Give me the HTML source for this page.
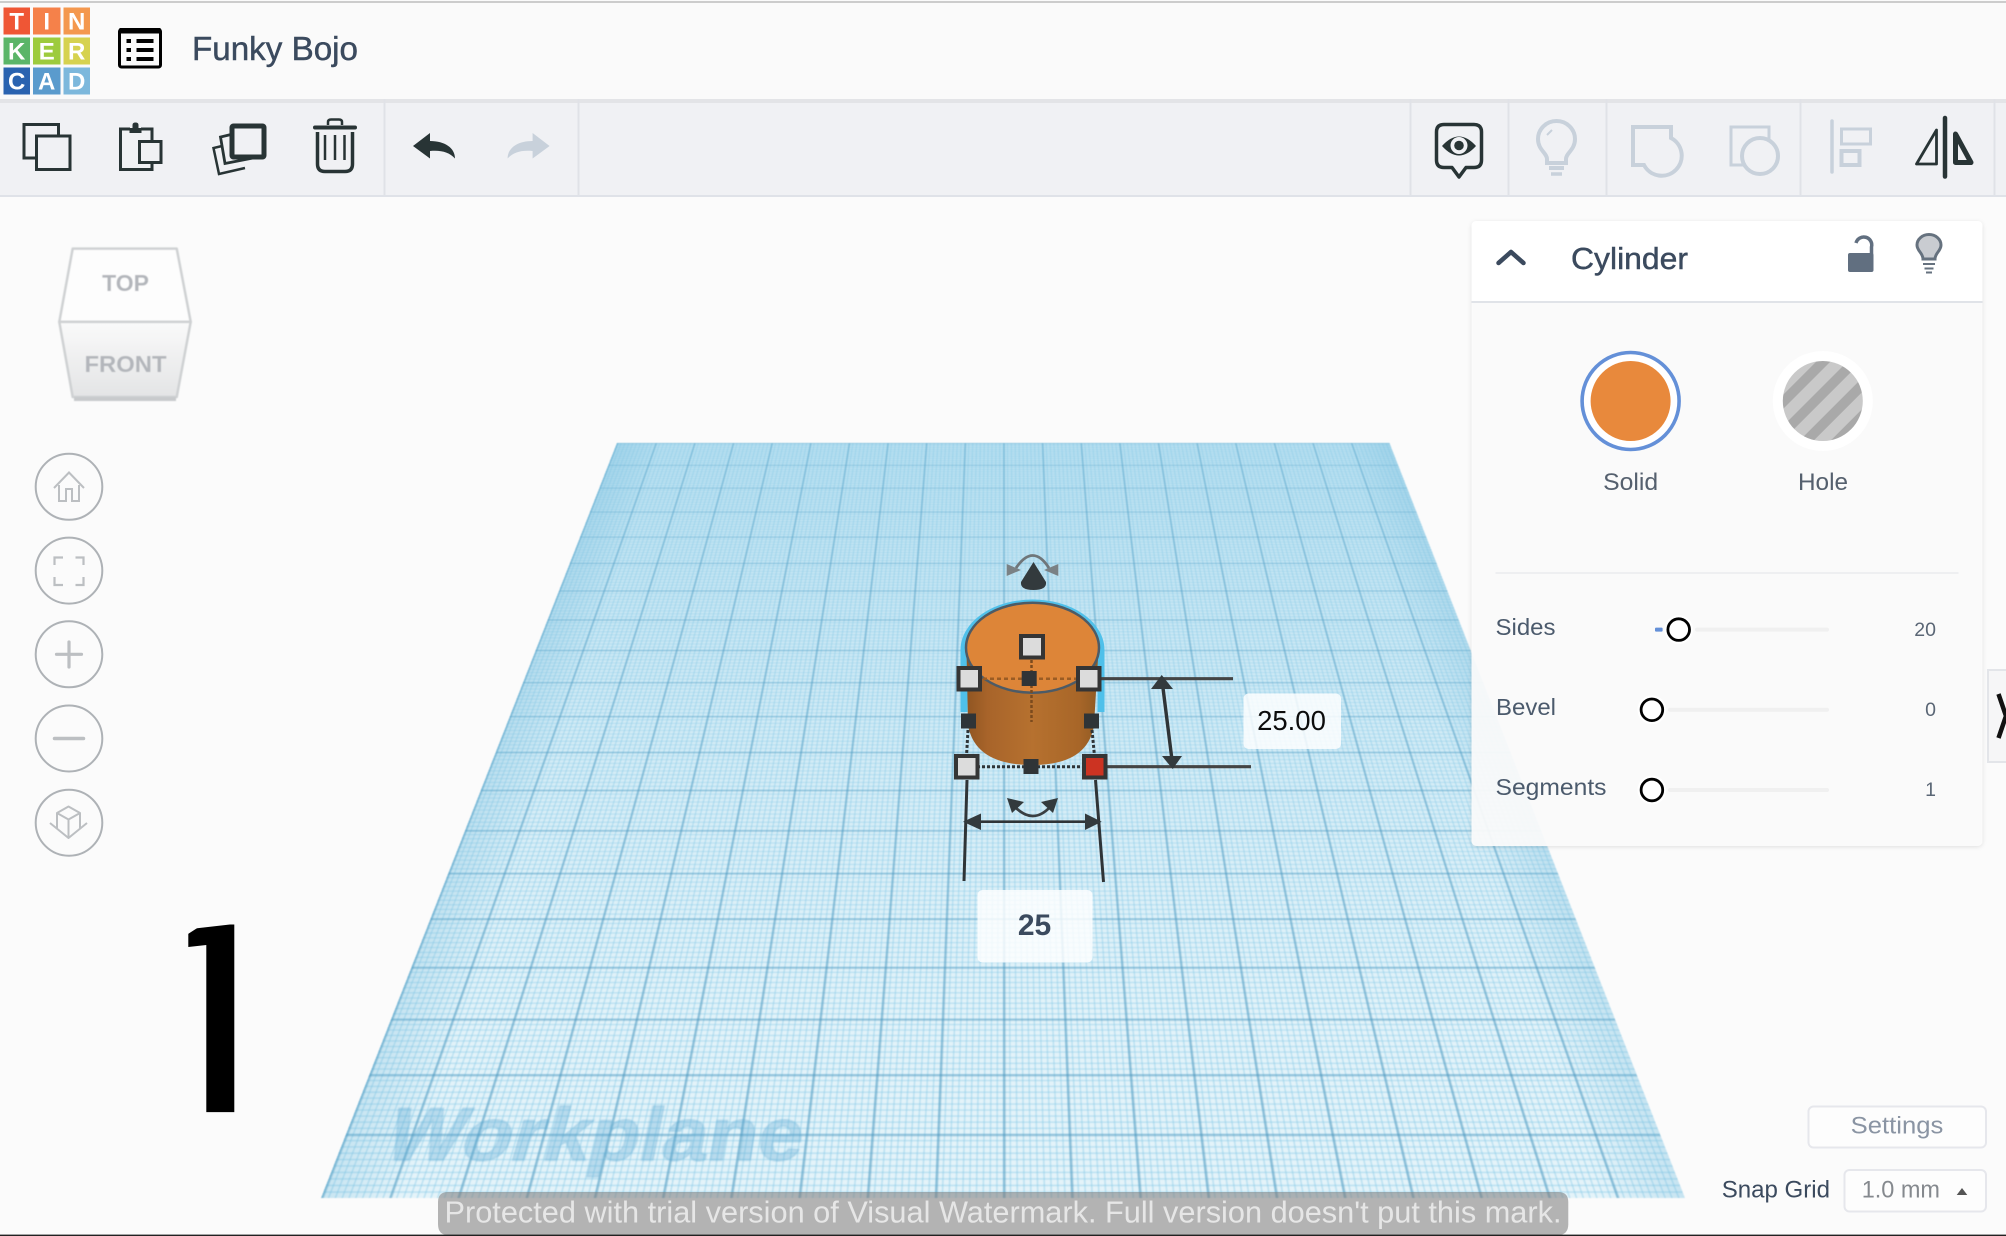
<!DOCTYPE html>
<html lang="en">
<head>
<meta charset="utf-8">
<title>Funky Bojo</title>
<style>
html,body{margin:0;padding:0;background:#fbfbfb;width:2006px;height:1236px;overflow:hidden}
#wrap{position:absolute;left:0;top:0;width:2006px;height:1236px;overflow:hidden;background:#fbfbfb}
#planeBox{position:absolute;left:0;top:0;width:2006px;height:1236px;filter:blur(.5px)}
#plane{position:absolute;left:0;top:0;width:1000px;height:1000px;transform-origin:0 0;
transform:matrix3d(.7725,0,0,0,-.4352,.2355,0,-.00043365,0,0,1,0,617,443,0,1);
background-color:#e8f5fa;
background-image:
linear-gradient(90deg,rgba(105,180,215,.24),rgba(105,180,215,0) 6%,rgba(105,180,215,0) 94%,rgba(105,180,215,.24)),
linear-gradient(180deg,rgba(110,190,225,.4),rgba(110,190,225,.2) 50%,rgba(110,190,225,.05) 85%,rgba(110,190,225,.03)),
linear-gradient(90deg,rgba(70,145,185,.48) 0,rgba(70,145,185,.48) 1.6px,transparent 1.6px),
linear-gradient(180deg,rgba(70,145,185,.42) 0,rgba(70,145,185,.42) 2px,transparent 2px),
linear-gradient(90deg,rgba(140,205,232,.55) 0,rgba(140,205,232,.55) 1px,transparent 1px),
linear-gradient(180deg,rgba(140,205,232,.55) 0,rgba(140,205,232,.55) 1.1px,transparent 1.1px);
background-size:100% 100%,100% 100%,50px 50px,50px 50px,5px 5px,5px 5px}
#wp{position:absolute;left:33px;top:920px;font:bold 62px/62px "Liberation Sans",sans-serif;color:rgba(85,165,210,.3);-webkit-text-stroke:1px rgba(85,165,210,.3);white-space:nowrap}
svg{position:absolute;left:0;top:0}
text{font-family:"Liberation Sans",sans-serif}
</style>
</head>
<body>
<div id="wrap">
<div id="planeBox"><div id="plane"><div id="wp">Workplane</div></div></div>

<svg width="2006" height="1236" viewBox="0 0 2006 1236" xmlns="http://www.w3.org/2000/svg">
<defs>
<filter id="hs" x="-5%" y="-20%" width="110%" height="160%"><feDropShadow dx="0" dy="1" stdDeviation="2.5" flood-color="#000" flood-opacity=".16"/></filter>
<filter id="ps" x="-5%" y="-5%" width="110%" height="110%"><feDropShadow dx="0" dy="1" stdDeviation="2" flood-color="#000" flood-opacity=".12"/></filter>
<filter id="soft"><feGaussianBlur stdDeviation=".6"/></filter>
<linearGradient id="body" x1="0" x2="1" y1="0" y2="0"><stop offset="0" stop-color="#8f5522"/><stop offset=".16" stop-color="#a8642a"/><stop offset=".5" stop-color="#b6712f"/><stop offset=".85" stop-color="#a86628"/><stop offset="1" stop-color="#8f5a24"/></linearGradient>
<linearGradient id="front" x1="0" x2="0" y1="0" y2="1"><stop offset="0" stop-color="#fafafa"/><stop offset="1" stop-color="#e3e4e5"/></linearGradient>
<pattern id="hatch" width="22" height="22" patternUnits="userSpaceOnUse" patternTransform="rotate(-45)"><rect width="22" height="22" fill="#c9c9c9"/><rect width="22" height="10" fill="#a9a9a9"/></pattern>
<clipPath id="one"><polygon points="188.3,929.3 234.3,924 234.3,1112.3 206.3,1112.3 206.3,945 188.3,947"/></clipPath>
</defs>

<!-- header -->
<rect x="0" y="0" width="2006" height="99" fill="#fafafa" filter="url(#hs)"/>
<rect x="0" y="1" width="2006" height="2" fill="#cccccc"/>
<rect x="0" y="99" width="2006" height="96" fill="#f0f1f4"/>
<rect x="0" y="99" width="2006" height="4" fill="#000" opacity=".05"/>
<rect x="0" y="195" width="2006" height="2" fill="#dfe2e8"/>
<g fill="#e0e2e7">
<rect x="383.5" y="99" width="2" height="96"/><rect x="577.5" y="99" width="2" height="96"/>
<rect x="1409.5" y="99" width="2" height="96"/><rect x="1507.5" y="99" width="2" height="96"/><rect x="1605.5" y="99" width="2" height="96"/><rect x="1799.5" y="99" width="2" height="96"/><rect x="1993.5" y="99" width="2" height="96"/>
</g>

<!-- logo -->
<g>
<rect x="3.5" y="7.5" width="26.5" height="27" fill="#ef5635"/><rect x="33" y="7.5" width="27.5" height="27" fill="#f5814a"/><rect x="63.5" y="7.5" width="26.5" height="27" fill="#f4984e"/>
<rect x="3.5" y="37.5" width="26.5" height="27" fill="#5bb568"/><rect x="33" y="37.5" width="27.5" height="27" fill="#9dcb3d"/><rect x="63.5" y="37.5" width="26.5" height="27" fill="#d6d24f"/>
<rect x="3.5" y="67.5" width="26.5" height="27" fill="#2a63b0"/><rect x="33" y="67.5" width="27.5" height="27" fill="#5a9bcd"/><rect x="63.5" y="67.5" width="26.5" height="27" fill="#7db8dc"/>
<g fill="#fff" font-size="24" font-weight="700" text-anchor="middle">
<text x="16.7" y="29.5">T</text><text x="46.7" y="29.5">I</text><text x="76.7" y="29.5">N</text>
<text x="16.7" y="59.5">K</text><text x="46.7" y="59.5">E</text><text x="76.7" y="59.5">R</text>
<text x="16.7" y="89.5">C</text><text x="46.7" y="89.5">A</text><text x="76.7" y="89.5">D</text>
</g>
</g>
<!-- doc list icon -->
<rect x="119.5" y="29.5" width="41" height="37.5" rx="2" fill="#fafafa" stroke="#000" stroke-width="3"/>
<rect x="119.5" y="28" width="41" height="5.5" fill="#000"/>
<g fill="#000"><rect x="126.5" y="39" width="4.5" height="4"/><rect x="136.5" y="39" width="17" height="4"/><rect x="126.5" y="48" width="4.5" height="4"/><rect x="136.5" y="48" width="17" height="4"/><rect x="126.5" y="57" width="4.5" height="4"/><rect x="136.5" y="57" width="17" height="4"/></g>
<text x="192" y="60" font-size="33" fill="#3b4a5e" stroke="#3b4a5e" stroke-width=".45" textLength="166" lengthAdjust="spacingAndGlyphs">Funky Bojo</text>

<!-- left tools -->
<g fill="none" stroke="#283435" stroke-width="3">
<rect x="24" y="124.5" width="34.5" height="33.5"/>
<rect x="36.5" y="136" width="33.5" height="33.5" fill="#f0f1f4"/>
<path d="M130 129H120.5V169.5H152V129H141"/>
<rect x="139.5" y="141.5" width="21.5" height="21" fill="#f0f1f4"/>
<path d="M222 146L213.5 148L219 174L245 168" stroke-width="2.5"/>
<path d="M231 134.5L220.5 137L225 163.5L253 158" stroke-width="2.8"/>
<rect x="232" y="126" width="32" height="31" stroke-width="5" rx="1.5" fill="#f0f1f4"/>
</g>
<path d="M129.5 133V128H132.5V125Q132.5 122.5 135.5 122.5Q138.5 122.5 138.5 125V128H141.5V133Z" fill="#283435"/>
<g fill="none" stroke="#283435">
<path d="M315 127.5H355" stroke-width="4" stroke-linecap="round"/>
<path d="M328 125V122Q328 119.5 331 119.5H339Q342 119.5 342 122V125" stroke-width="2.5"/>
<path d="M317.5 132V164Q317.5 171.5 325 171.5H345Q352.5 171.5 352.5 164V132" stroke-width="3.5"/>
<path d="M325 135V160M335 135V160M344.5 135V160" stroke-width="2.5"/>
</g>
<path id="undo" d="M413 146L430 133V141C445 141 455 148 455 158.5C449 152 441 150 430 151V158.5Z" fill="#283435"/>
<path d="M549.6 146L532.6 133V141C517.6 141 507.6 148 507.6 158.5C513.6 152 521.6 150 532.6 151V158.5Z" fill="#c8d1db"/>

<!-- right tools -->
<path d="M1444 124.5H1474Q1481.5 124.5 1481.5 132V160Q1481.5 167.5 1474 167.5H1466L1459 177L1452 167.5H1444Q1436.5 167.5 1436.5 160V132Q1436.5 124.5 1444 124.5Z" fill="none" stroke="#283435" stroke-width="3.5" stroke-linejoin="round"/>
<path d="M1442 146Q1459 127 1476 146Q1459 165 1442 146Z" fill="#283435"/>
<circle cx="1459" cy="145.5" r="8.5" fill="#f0f1f4"/><circle cx="1459" cy="145.5" r="4.8" fill="#283435"/>
<g fill="none" stroke="#c8d1db">
<path d="M1547 163V159C1547 153 1538 150 1538 139A18.5 18 0 0 1 1575 139C1575 150 1566 153 1566 159V163Z" stroke-width="4"/>
<path d="M1549 168H1564" stroke-width="4"/><path d="M1551 174H1562" stroke-width="3.5"/>
<path d="M1547 135L1552 130" stroke-width="2"/>
<path d="M1633 127H1671V138A20 20 0 1 1 1644 165H1633Z" stroke-width="4"/>
<rect x="1731" y="127" width="38" height="38" stroke-width="3"/>
<circle cx="1760" cy="156" r="18" stroke-width="4" fill="#f0f1f4"/>
<path d="M1832 121V172" stroke-width="3.5" stroke-linecap="round"/>
<rect x="1841.5" y="129" width="29" height="15" stroke-width="3"/>
<rect x="1841.5" y="151" width="18" height="14" stroke-width="4"/>
</g>
<g fill="none" stroke="#283435" stroke-linejoin="round">
<path d="M1945 118V176.5" stroke-width="4.5" stroke-linecap="round"/>
<path d="M1936.5 130L1916.5 164H1936.5Z" stroke-width="2.8"/>
<path d="M1955.5 134L1971 162.5H1955.5Z" stroke-width="5"/>
</g>

<!-- view cube -->
<g filter="url(#soft)">
<polygon points="72.7,248.6 176.7,248.6 190.7,321.9 59.3,321.9" fill="#fdfdfd" stroke="#cfd1d3" stroke-width="2.5" stroke-linejoin="round"/>
<polygon points="59.3,321.9 190.7,321.9 176.7,397 72.7,397" fill="url(#front)" stroke="#cfd1d3" stroke-width="2.5" stroke-linejoin="round"/>
<rect x="74" y="397" width="102" height="4" fill="#c8cacc"/>
<text x="125.5" y="291" text-anchor="middle" font-size="23" font-weight="700" fill="#b3b6bb">TOP</text>
<text x="125.5" y="372" text-anchor="middle" font-size="23" font-weight="700" fill="#b3b6bb" textLength="82" lengthAdjust="spacingAndGlyphs">FRONT</text>
</g>
<!-- nav buttons -->
<g fill="#fbfbfb" stroke="#aeb2b6" stroke-width="2">
<ellipse cx="69" cy="486.8" rx="33.3" ry="33"/><ellipse cx="69" cy="570.6" rx="33.3" ry="33"/><ellipse cx="69" cy="654.3" rx="33.3" ry="33"/><ellipse cx="69" cy="738.5" rx="33.3" ry="33"/><ellipse cx="69" cy="822.7" rx="33.3" ry="33"/>
</g>
<g fill="none" stroke="#bcbfc2">
<path d="M54 488L69 472.5L84 488M59 485V501H66V489H72V501H79V485" stroke-width="2"/>
<path d="M54.5 565V557.5H63M75.5 557.5H83.5V565M54.5 577V585H63M75.5 585H83.5V577" stroke-width="2.2"/>
<path d="M56.5 654.3H81.5M69 642V667" stroke-width="3.2" stroke-linecap="round"/>
<path d="M54.5 738.5H83.5" stroke-width="3.5" stroke-linecap="round"/>
<path d="M57 813L68.5 806.5L80 813L68.5 819.5ZM57 813V829M80 813V829M68.5 819.5V838M50 823L68.5 838L87 823" stroke-width="2" stroke-linejoin="round"/>
</g>

<!-- number 1 -->
<text x="137" y="1112.3" font-size="273" font-weight="700" fill="#000" clip-path="url(#one)">1</text>

<!-- cylinder -->
<path d="M964 712V650A68.5 47 0 0 1 1101 650V712" fill="none" stroke="#4fc0ea" stroke-width="7"/>
<path d="M966.5 650L968 725Q975 765 1032 765Q1088 765 1094 725L1098.5 650Z" fill="url(#body)"/>
<ellipse cx="1032.5" cy="647.7" rx="66.5" ry="45" fill="#dd8538" stroke="#4d5b66" stroke-width="2.5"/>
<g fill="none">
<path d="M969 678.7H1089" stroke="#9a5c24" stroke-width="2.5" stroke-dasharray="4 3"/>
<path d="M1031.5 660V722" stroke="#7b4a1d" stroke-width="2.5" stroke-dasharray="3 2"/>
<path d="M967 766.7H1095" stroke="#2f3437" stroke-width="3" stroke-dasharray="3 2"/>
<path d="M968 730L966.5 756M1092 730L1094.5 756" stroke="#2f3437" stroke-width="3" stroke-dasharray="3 2"/>
<path d="M1100 678.7H1233M1105 766.7H1251" stroke="#444" stroke-width="3.2"/>
<path d="M1162.5 684L1172 760" stroke="#2f3437" stroke-width="3.4"/>
<path d="M967 780L964 881M1095.5 780L1103.5 882" stroke="#2f3437" stroke-width="3"/>
<path d="M975 821.7H1090" stroke="#2f3437" stroke-width="2.6"/>
<path d="M1014 806Q1033 826 1051 806" stroke="#3a3f42" stroke-width="2.8"/>
<path d="M1016 568Q1033 543 1049 568" stroke="#6f767a" stroke-width="2.8"/>
</g>
<g fill="#333a3d">
<polygon points="1161.7,675 1151,689 1173,689"/>
<polygon points="1172.7,769 1162,756 1182,756"/>
<polygon points="963,821.7 981,813.5 981,830"/>
<polygon points="1101.7,821.7 1085,813.5 1085,830"/>
<polygon points="1007,798 1024,802 1012,813"/>
<polygon points="1058,798 1041,802 1053,813"/>
<path d="M1033.5 562L1046 582Q1047 590 1033.5 590Q1020 590 1021 582Z"/>
</g>
<g fill="#7a8185"><polygon points="1006.7,564 1006.7,576 1021,570"/><polygon points="1058.3,564 1058.3,576 1044,570"/></g>
<g stroke="#353535" stroke-width="4" fill="#dcdcdc">
<rect x="1021" y="636" width="22" height="21.5"/>
<rect x="958.5" y="668" width="21.5" height="21.5"/>
<rect x="1078" y="668" width="21.5" height="21.5"/>
<rect x="956" y="756" width="21.5" height="21.5"/>
<rect x="1084" y="756" width="21.5" height="21.5" fill="#cc3322"/>
</g>
<g fill="#2f3437">
<rect x="1021.7" y="671" width="15" height="15"/><rect x="961" y="713.5" width="15" height="15"/><rect x="1084" y="713.5" width="15" height="15"/><rect x="1023.5" y="759" width="15" height="15"/>
</g>
<rect x="1243.5" y="693.5" width="97.5" height="55.5" rx="5" fill="#fff" fill-opacity=".82"/>
<text x="1291.5" y="730" text-anchor="middle" font-size="27.5" fill="#0c0c0c">25.00</text>
<rect x="977.5" y="890" width="115" height="72.5" rx="5" fill="#fff" fill-opacity=".82"/>
<text x="1034.5" y="935" text-anchor="middle" font-size="30" font-weight="700" fill="#3b4a5e">25</text>

<!-- inspector panel -->
<rect x="1471.5" y="221" width="511" height="625" rx="5" fill="#fbfbfb" fill-opacity=".93" filter="url(#ps)"/>
<path d="M1471.5 301V226Q1471.5 221 1476.5 221H1977.5Q1982.5 221 1982.5 226V301Z" fill="#fff"/>
<rect x="1471.5" y="301" width="511" height="2" fill="#e0e3e8"/>
<path d="M1498.5 263L1511 252L1523.5 263" fill="none" stroke="#3b4a5e" stroke-width="4.5" stroke-linecap="round" stroke-linejoin="round"/>
<text x="1571" y="269" font-size="31" fill="#3b4a5e" stroke="#3b4a5e" stroke-width=".45" textLength="117" lengthAdjust="spacingAndGlyphs">Cylinder</text>
<rect x="1848" y="253" width="25.5" height="19" rx="2" fill="#616f80"/>
<path d="M1856 243A8 8 0 0 1 1871.5 247V254" fill="none" stroke="#616f80" stroke-width="3.5"/>
<path d="M1923 259C1923 253 1917 251 1917 245A12 10.5 0 0 1 1941 245C1941 251 1935 253 1935 259Z" fill="#c9ccd1" stroke="#66727f" stroke-width="3"/>
<path d="M1923 264H1935M1924.5 268.5H1933.5M1926 272.5H1932" stroke="#66727f" stroke-width="2"/>

<circle cx="1630.6" cy="401" r="48.5" fill="#fff" stroke="#6490d8" stroke-width="3.6"/>
<circle cx="1630.6" cy="401" r="40" fill="#e8893c"/>
<circle cx="1822.8" cy="401" r="50" fill="#fff"/>
<circle cx="1822.8" cy="401" r="40" fill="url(#hatch)"/>
<text x="1630.6" y="490" text-anchor="middle" font-size="24" fill="#55606e" textLength="55" lengthAdjust="spacingAndGlyphs">Solid</text>
<text x="1823" y="490" text-anchor="middle" font-size="24" fill="#55606e" textLength="50" lengthAdjust="spacingAndGlyphs">Hole</text>
<rect x="1495.5" y="572" width="463" height="2" fill="#eeeff1"/>

<g font-size="23.5" fill="#4b5a6c">
<text x="1495.5" y="635" textLength="60" lengthAdjust="spacingAndGlyphs">Sides</text>
<text x="1496" y="715" textLength="60" lengthAdjust="spacingAndGlyphs">Bevel</text>
<text x="1495.5" y="795" textLength="111" lengthAdjust="spacingAndGlyphs">Segments</text>
</g>
<g fill="#f0f0f0"><rect x="1695" y="627.6" width="134" height="4" rx="2"/><rect x="1668" y="707.8" width="161" height="4" rx="2"/><rect x="1668" y="788" width="161" height="4" rx="2"/></g>
<rect x="1655" y="627.6" width="7.6" height="4" rx="1" fill="#6490d8"/>
<g fill="#fff">
<circle cx="1678.7" cy="629.6" r="14.5"/><circle cx="1651.9" cy="709.8" r="14.5"/><circle cx="1651.9" cy="790" r="14.5"/>
</g>
<g fill="#fff" stroke="#000" stroke-width="2.8">
<circle cx="1678.7" cy="629.6" r="10.8"/><circle cx="1651.9" cy="709.8" r="10.8"/><circle cx="1651.9" cy="790" r="10.8"/>
</g>
<g font-size="19.5" fill="#5a6675" text-anchor="end">
<text x="1936" y="636">20</text><text x="1936" y="716">0</text><text x="1936" y="796">1</text>
</g>

<!-- right tab -->
<rect x="1988" y="670" width="22" height="92" fill="#f6f6f7" stroke="#e3e5e9" stroke-width="2"/>
<path d="M1998.5 694L2006 716L1998.5 738" fill="none" stroke="#111" stroke-width="4.5"/>

<!-- bottom right controls -->
<rect x="1808.5" y="1106.5" width="177.5" height="41" rx="5" fill="#fdfdfd" stroke="#e6e7ec" stroke-width="2"/>
<text x="1850.7" y="1133.5" font-size="24" fill="#8a94a3" textLength="92.6" lengthAdjust="spacingAndGlyphs">Settings</text>
<text x="1721.7" y="1197.5" font-size="24" fill="#3b4a5e" textLength="108.3" lengthAdjust="spacingAndGlyphs">Snap Grid</text>
<rect x="1844.5" y="1170" width="141.5" height="41.5" rx="5" fill="#fdfdfd" stroke="#e6e7ec" stroke-width="2"/>
<text x="1861.7" y="1197.5" font-size="24" fill="#85898e" textLength="78.3" lengthAdjust="spacingAndGlyphs">1.0 mm</text>
<polygon points="1956.7,1195 1967.3,1195 1962,1188" fill="#555"/>

<!-- watermark -->
<path d="M438 1224V1202Q438 1192 448 1192H1558Q1568.3 1192 1568.3 1202V1224Q1568.3 1235 1558 1235H448Q438 1235 438 1224Z" fill="#808080" fill-opacity=".58"/>
<text x="444.5" y="1222.7" font-size="31" fill="#e6e6e6" textLength="1117" lengthAdjust="spacingAndGlyphs">Protected with trial version of Visual Watermark. Full version doesn't put this mark.</text>
<rect x="0" y="1234.6" width="2006" height="1.4" fill="#222"/>
</svg>
</div>
</body>
</html>
